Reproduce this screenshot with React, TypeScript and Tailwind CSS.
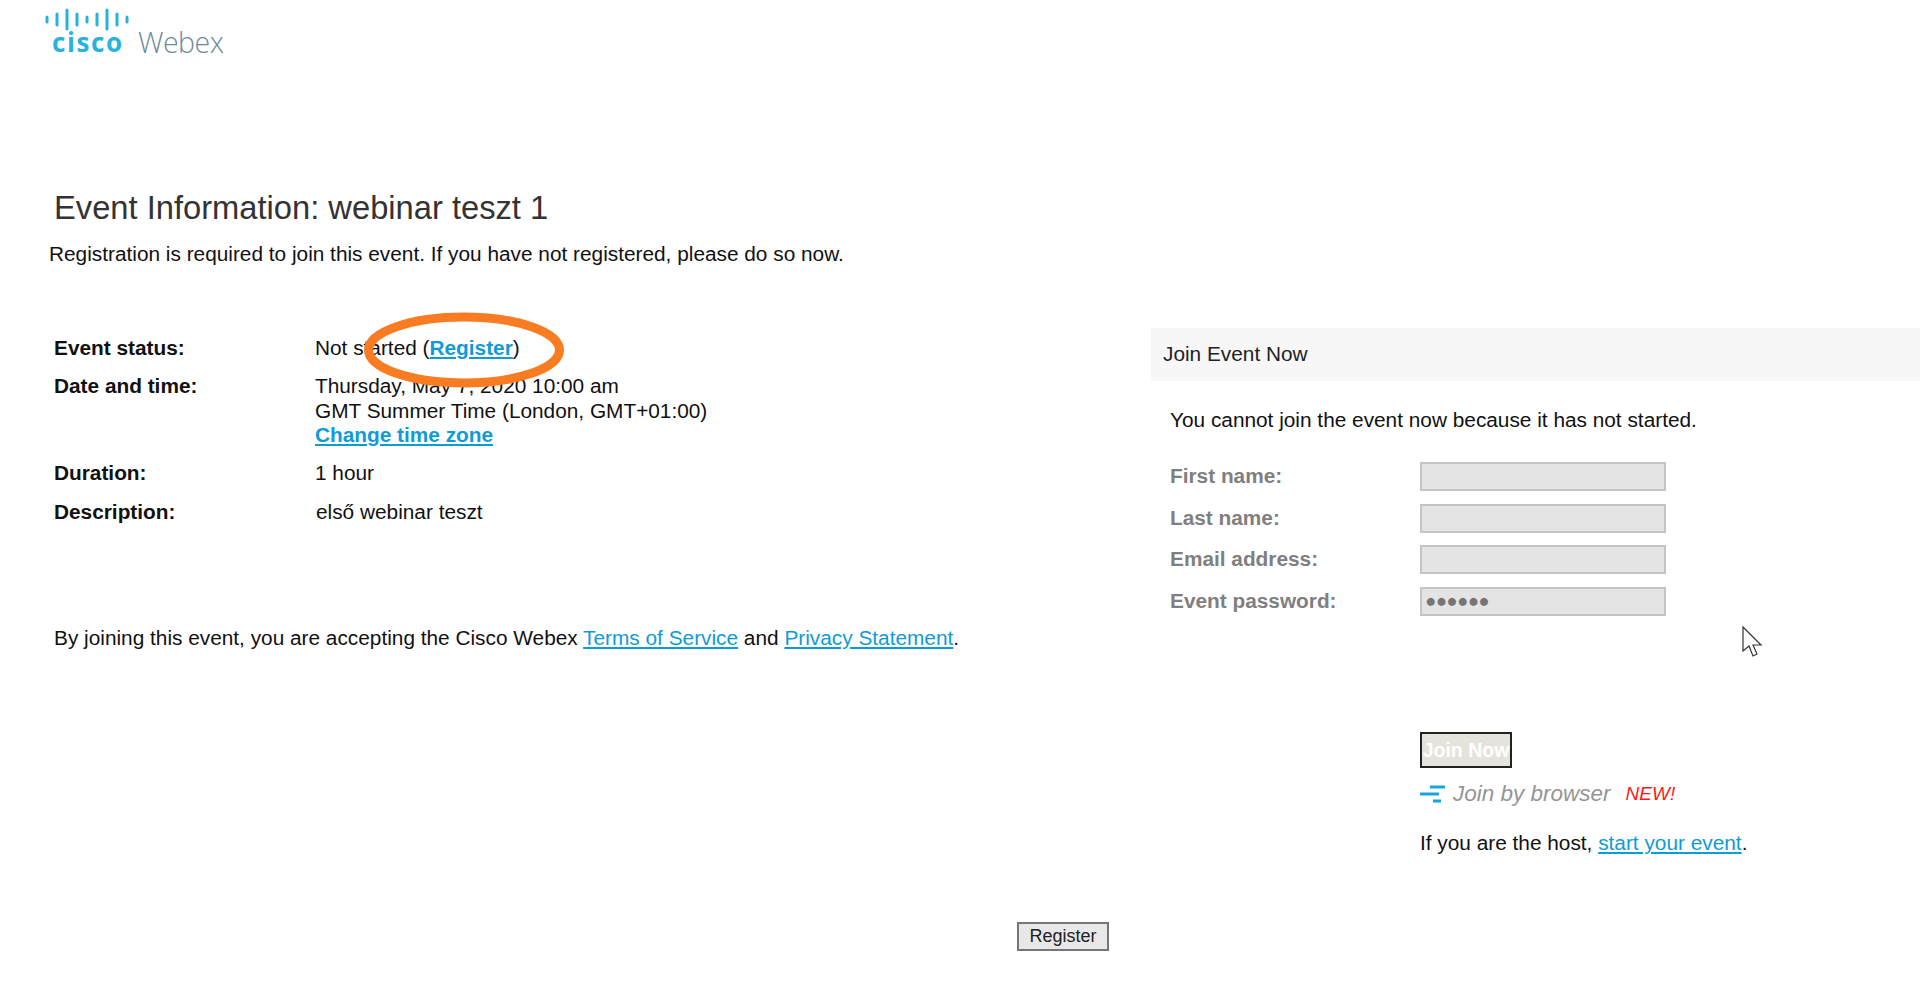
import React from "react";

const bars = [
  { x: 47, h: 5 },
  { x: 57, h: 11 },
  { x: 67, h: 19 },
  { x: 77, h: 11 },
  { x: 87, h: 5 },
  { x: 97, h: 11 },
  { x: 107, h: 19 },
  { x: 117, h: 11 },
  { x: 127, h: 5 },
];

function CiscoLogo() {
  return (
    <div className="relative h-[60px] w-[240px]">
      <svg className="absolute left-0 top-0" width="140" height="36" viewBox="0 0 140 36">
        {bars.map((b) => (
          <line
            key={b.x}
            x1={b.x}
            x2={b.x}
            y1={19.5 - b.h / 2}
            y2={19.5 + b.h / 2}
            stroke="#27b3dc"
            strokeWidth="3"
            strokeLinecap="round"
          />
        ))}
      </svg>
      <span className="absolute left-[52px] top-[27px] font-['Open_Sans'] text-[26px] font-bold leading-[30px] tracking-[1.6px] text-[#27b3dc]">
        cisco
      </span>
      <span className="absolute left-[138px] top-[27px] font-['Open_Sans'] text-[28.5px] font-light leading-[30px] tracking-[-0.5px] text-[#6f8a9c]">
        Webex
      </span>
    </div>
  );
}

function InfoRow({ label, children, className = "" }: { label: string; children: React.ReactNode; className?: string }) {
  return (
    <div className={`flex ${className}`}>
      <div className="w-[261px] font-bold">{label}</div>
      <div>{children}</div>
    </div>
  );
}

function Field({ label, value }: { label: string; value?: string }) {
  return (
    <div className="flex h-[41.7px] items-center">
      <div className="w-[250px] font-bold text-[#7f7f7f]">{label}</div>
      <div className="flex h-[29px] w-[246px] items-center border-2 border-[#c4c4c4] bg-[#e4e4e4] pl-[3px] text-[18.5px] tracking-[-0.5px] text-[#757575]">
        {value}
      </div>
    </div>
  );
}

export default function App() {
  return (
    <div className="relative h-[990px] w-[1920px] overflow-hidden bg-white font-['Liberation_Sans',Arial,sans-serif] text-[20.82px] leading-[24.5px] text-[#111]">
      <CiscoLogo />

      <div className="flex">
        <div className="w-[1151px] shrink-0">
          <h1 className="ml-[54px] mt-[129px] text-[32.7px] font-normal leading-[38px] text-[#333]">
            Event Information: webinar teszt 1
          </h1>
          <p className="ml-[49px] mt-[15px]">
            Registration is required to join this event. If you have not registered, please do so now.
          </p>

          <div className="ml-[54px] mt-[69px]">
            <InfoRow label="Event status:">
              Not started (
              <a className="font-bold text-[#0f9bd7] underline">Register</a>)
            </InfoRow>
            <InfoRow label="Date and time:" className="mt-[14px]">
              <div>Thursday, May 7, 2020 10:00 am</div>
              <div>GMT Summer Time (London, GMT+01:00)</div>
              <a className="font-bold text-[#0f9bd7] underline">Change time zone</a>
            </InfoRow>
            <InfoRow label="Duration:" className="mt-[13px]">
              1 hour
            </InfoRow>
            <InfoRow label="Description:" className="mt-[15px]">
              <span className="ml-px">első webinar teszt</span>
            </InfoRow>
          </div>

          <p className="ml-[54px] mt-[101px]">
            By joining this event, you are accepting the Cisco Webex{" "}
            <a className="text-[#0f9bd7] underline">Terms of Service</a> and{" "}
            <a className="text-[#0f9bd7] underline">Privacy Statement</a>.
          </p>
        </div>

        <div className="flex-1 pt-[268px]">
          <div className="flex h-[53px] items-center bg-[#f7f7f7] pl-[12px] text-[#222]">Join Event Now</div>
          <div className="pl-[19px]">
            <p className="mt-[27px]">You cannot join the event now because it has not started.</p>
            <div className="mt-[23px]">
              <Field label="First name:" />
              <Field label="Last name:" />
              <Field label="Email address:" />
              <Field label="Event password:" value="●●●●●●" />
            </div>
            <div className="ml-[250px]">
              <button className="mt-[110px] block h-[36px] w-[92px] border-2 border-[#222] bg-[#e4e4dc] text-center text-[19.5px] font-bold text-white">
                Join Now
              </button>
              <div className="mt-[10px] flex h-[32px] items-center italic">
                <svg width="26" height="18" viewBox="0 0 26 18" className="shrink-0">
                  <path d="M10 2h15M0 9h19M13 16h8" stroke="#17a5e0" strokeWidth="3" fill="none" />
                </svg>
                <span className="ml-[7px] text-[22.5px] text-[#959595]">Join by browser</span>
                <span className="ml-[15px] text-[19px] text-[#ff1a1a]">NEW!</span>
              </div>
              <p className="mt-[21px]">
                If you are the host, <a className="text-[#0f9bd7] underline">start your event</a>.
              </p>
            </div>
          </div>
        </div>
      </div>

      <div className="absolute left-[1017px] top-[922px]">
        <button className="flex h-[29px] w-[92px] items-center justify-center border-2 border-[#767676] bg-[#e8e8e8] text-[18px] text-[#222]">
          Register
        </button>
      </div>

      {/* hand drawn annotation on top of the status row */}
      <svg className="pointer-events-none absolute left-[360px] top-[309px]" width="210" height="82" viewBox="0 0 210 82">
        <ellipse cx="104" cy="41" rx="95.5" ry="33" fill="none" stroke="#f97c22" strokeWidth="9" />
      </svg>

      {/* mouse cursor */}
      <svg className="pointer-events-none absolute left-[1741px] top-[625px]" width="22" height="34" viewBox="0 0 22 34">
        <path d="M2 2v24l6-5 4 10 4-2-4-9h8z" fill="#fff" stroke="#333" strokeWidth="1.2" />
      </svg>
    </div>
  );
}
